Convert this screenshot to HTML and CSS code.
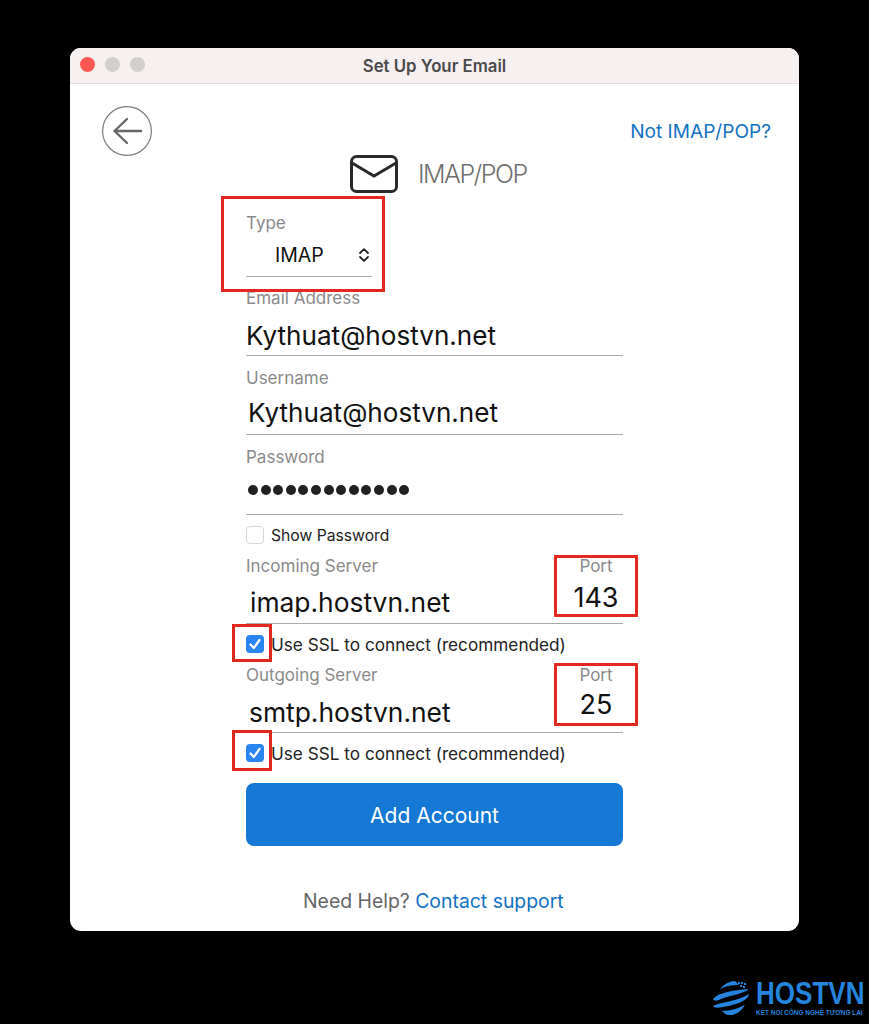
FILE: index.html
```html
<!DOCTYPE html>
<html lang="en">
<head>
    <meta charset="UTF-8">
    <meta name="viewport" content="width=device-width, initial-scale=1.0">
    <title>Set Up Your Email</title>
    <link rel="stylesheet" href="styles.css">
</head>
<body>
    <div class="window">
        <div class="titlebar">
            <div class="lights">
                <span class="light light-close"></span>
                <span class="light"></span>
                <span class="light"></span>
            </div>
            <div class="title">Set Up Your Email</div>
        </div>

        <div class="content">
            <div class="toprow">
                <div class="back">
                    <svg width="50" height="50" viewBox="0 0 50 50" fill="none">
                        <circle cx="25" cy="25" r="24.4" stroke="#7c7c7c" stroke-width="1.2"/>
                        <path d="M12.5 25H39M25 13L12.5 25L25 37" stroke="#666" stroke-width="2.4" stroke-linecap="round" stroke-linejoin="round"/>
                    </svg>
                </div>
                <a class="link not-imap">Not IMAP/POP?</a>
            </div>

            <div class="heading">
                <svg width="48" height="38" viewBox="0 0 48 38" fill="none">
                    <rect x="1.5" y="1.5" width="45" height="35" rx="5" stroke="#2a2a2a" stroke-width="3"/>
                    <path d="M2 8L24 21L46 8" stroke="#2a2a2a" stroke-width="3"/>
                </svg>
                <span class="heading-text">IMAP/POP</span>
            </div>

            <form class="form">
                <div class="field field-type">
                    <label>Type</label>
                    <div class="select">
                        <span>IMAP</span>
                        <svg width="10" height="14" viewBox="0 0 10 14" fill="none">
                            <path d="M1 5L5 1.2L9 5M1 9L5 12.8L9 9" stroke="#222" stroke-width="1.8" stroke-linecap="round" stroke-linejoin="round"/>
                        </svg>
                    </div>
                </div>

                <div class="field field-email">
                    <label>Email Address</label>
                    <div class="value">Kythuat@hostvn.net</div>
                </div>

                <div class="field field-user">
                    <label>Username</label>
                    <div class="value">Kythuat@hostvn.net</div>
                </div>

                <div class="field field-pass">
                    <label>Password</label>
                    <div class="dots">
                        <span></span><span></span><span></span><span></span><span></span><span></span><span></span><span></span><span></span><span></span><span></span><span></span><span></span>
                    </div>
                </div>

                <div class="check check-show">
                    <span class="box"></span>
                    <span>Show Password</span>
                </div>

                <div class="field field-server field-in">
                    <div class="server">
                        <label>Incoming Server</label>
                        <div class="value">imap.hostvn.net</div>
                    </div>
                    <div class="port">
                        <label>Port</label>
                        <div class="port-value">143</div>
                    </div>
                </div>

                <div class="check">
                    <span class="box box-on">
                        <svg width="18" height="18" viewBox="0 0 18 18" fill="none">
                            <path d="M4.5 9.5L7.8 13L13.5 5" stroke="#fff" stroke-width="2.2" stroke-linecap="round" stroke-linejoin="round"/>
                        </svg>
                    </span>
                    <span>Use SSL to connect (recommended)</span>
                </div>

                <div class="field field-server field-out">
                    <div class="server">
                        <label>Outgoing Server</label>
                        <div class="value">smtp.hostvn.net</div>
                    </div>
                    <div class="port">
                        <label>Port</label>
                        <div class="port-value">25</div>
                    </div>
                </div>

                <div class="check">
                    <span class="box box-on">
                        <svg width="18" height="18" viewBox="0 0 18 18" fill="none">
                            <path d="M4.5 9.5L7.8 13L13.5 5" stroke="#fff" stroke-width="2.2" stroke-linecap="round" stroke-linejoin="round"/>
                        </svg>
                    </span>
                    <span>Use SSL to connect (recommended)</span>
                </div>

                <button type="button" class="add-btn">Add Account</button>
            </form>

            <div class="help">Need Help? <a class="link">Contact support</a></div>

            <!-- red annotation boxes drawn over the form -->
            <div class="mark mark-type"></div>
            <div class="mark mark-port1"></div>
            <div class="mark mark-port2"></div>
            <div class="mark mark-check1"></div>
            <div class="mark mark-check2"></div>
        </div>
    </div>

    <div class="brand">
        <svg width="38" height="36" viewBox="0 0 38 36" fill="none">
            <path d="M8 9C12 4 17 1.500 23 1L27 5C19 5 13 6.500 8 9Z" fill="#2484de"/>
            <path d="M26 2h2v2h-2zM29 2h2v2h-2zM32 3h2v2h-2zM28 5h2v2h-2zM31 6h2v2h-2z" fill="#2484de"/>
            <path d="M1 19C6 13 20 10 37 9C32 14 18 15 9 19C5 21 2 21 1 19Z" fill="#2484de"/>
            <path d="M1 26C8 22 24 22 37 14C36 21 23 25 11 27C6 28 2 28 1 26Z" fill="#2484de"/>
            <path d="M10 31C18 31 27 28 33 25C29 32 23 35.500 17 35C14 35 12 33 10 31Z" fill="#2484de"/>
        </svg>
        <div class="brand-text">
            <div class="brand-name">HOSTVN</div>
            <div class="brand-sub">KẾT NỐI CÔNG NGHỆ TƯƠNG LAI</div>
        </div>
    </div>
</body>
</html>
```

FILE: styles.css
```css
body {
    margin: 0;
    background: #000;
    font-family: Inter, "Liberation Sans", sans-serif;
    color: #111;
}
.window {
    width: 729px;
    height: 883px;
    margin: 48px 0 0 70px;
    background: #fff;
    border-radius: 11px;
    overflow: hidden;
}
.titlebar {
    position: relative;
    height: 35px;
    background: #f6f0f0;
    border-bottom: 1px solid #e2dddd;
    display: flex;
    align-items: center;
    justify-content: center;
}
.lights {
    position: absolute;
    left: 10px;
    top: 9px;
    display: flex;
    gap: 10px;
}
.light {
    width: 15px;
    height: 15px;
    border-radius: 50%;
    background: #d3cfcf;
}
.light-close {
    background: #fc5753;
}
.title {
    font-size: 16.8px;
    font-weight: 600;
    color: #4a4a4a;
}
.content {
    position: relative;
    padding-top: 22px;
}
.toprow {
    display: flex;
    justify-content: space-between;
    align-items: center;
    height: 50px;
    padding: 0 28px 0 32px;
}
.back {
    height: 50px;
}
.link {
    color: #1272c4;
}
.not-imap {
    font-size: 19.1px;
}
.heading {
    display: flex;
    align-items: center;
    gap: 20px;
    height: 38px;
    margin-top: -1px;
    padding-left: 280px;
}
.heading-text {
    font-size: 25px;
    font-weight: 300;
    color: #6f6f6f;
    letter-spacing: -1.5px;
}
.form {
    display: flex;
    flex-direction: column;
    width: 377px;
    margin: 20px 0 0 176px;
}
.field {
    border-bottom: 1px solid #aaa;
}
.field label, .port label {
    display: block;
    font-size: 17px;
    line-height: 20px;
    color: #8a8a8a;
}
.field-type {
    width: 126px;
    height: 63px;
}
.select {
    display: flex;
    align-items: center;
    justify-content: space-between;
    height: 43px;
    padding: 0 3px 0 29px;
    font-size: 19.5px;
}
.value {
    font-size: 26.1px;
    line-height: 34px;
}
.field-email {
    height: 67px;
    margin-top: 11px;
}
.field-email .value {
    padding-top: 11px;
}
.field-user {
    height: 66px;
    margin-top: 12px;
}
.field-user .value {
    padding: 8px 0 0 2px;
}
.field-pass {
    height: 67px;
    margin-top: 12px;
}
.dots {
    display: flex;
    gap: 2.600px;
    padding: 18px 0 0 2px;
}
.dots span {
    width: 10px;
    height: 10px;
    border-radius: 50%;
    background: #222;
}
.check {
    display: flex;
    align-items: center;
    gap: 7px;
    height: 20px;
    margin-top: 10px;
    font-size: 17.2px;
    color: #222;
}
.check-show {
    font-size: 15.7px;
}
.box {
    width: 16px;
    height: 16px;
    border: 1px solid #d4d4d4;
    border-radius: 4px;
    background: #fff;
    flex: none;
    display: flex;
}
.box-on {
    width: 18px;
    height: 18px;
    border: 0;
    background: #2a84f2;
}
.field-server {
    display: flex;
    justify-content: space-between;
    height: 67px;
    margin-top: 11px;
}
.field-server .value {
    font-size: 26.4px;
}
.field-in .value {
    padding: 9px 0 0 4px;
}
.field-out .value {
    padding: 10px 0 0 3px;
}
.port {
    width: 84px;
    margin-right: -15px;
    text-align: center;
}
.port-value {
    font-size: 27px;
    line-height: 34px;
}
.field-in .port-value {
    padding-top: 5px;
}
.field-out .port-value {
    padding-top: 3px;
}
.add-btn {
    height: 63px;
    margin-top: 20px;
    padding-top: 2px;
    border: 0;
    border-radius: 8px;
    background: #1478d4;
    color: #fff;
    font-family: inherit;
    font-size: 21px;
}
.help {
    margin-top: 43px;
    margin-left: 233px;
    font-size: 19.4px;
    line-height: 24px;
    color: #666;
}
.mark {
    position: absolute;
    border: 3px solid #e5281f;
    box-sizing: border-box;
}
.mark-type {
    left: 151px;
    top: 112px;
    width: 164px;
    height: 96px;
}
.mark-port1 {
    left: 484px;
    top: 471px;
    width: 84px;
    height: 62px;
}
.mark-port2 {
    left: 484px;
    top: 579px;
    width: 84px;
    height: 63px;
}
.mark-check1 {
    left: 162px;
    top: 540px;
    width: 40px;
    height: 38px;
}
.mark-check2 {
    left: 162px;
    top: 646px;
    width: 40px;
    height: 41px;
}
.brand {
    display: flex;
    justify-content: flex-end;
    gap: 6px;
    margin-top: 49px;
    padding-right: 4px;
    color: #2484de;
}
.brand-text {
    width: 109px;
}
/* no condensed family is installed, so the logo text is squeezed */
.brand-name {
    font-family: "Liberation Sans", sans-serif;
    font-size: 31px;
    font-weight: 700;
    line-height: 28px;
    white-space: nowrap;
    transform: scaleX(0.84);
    transform-origin: left;
}
.brand-sub {
    font-family: "Liberation Sans", sans-serif;
    font-size: 8px;
    font-weight: 700;
    line-height: 9px;
    white-space: nowrap;
    transform: scaleX(0.81);
    transform-origin: left;
}
```
